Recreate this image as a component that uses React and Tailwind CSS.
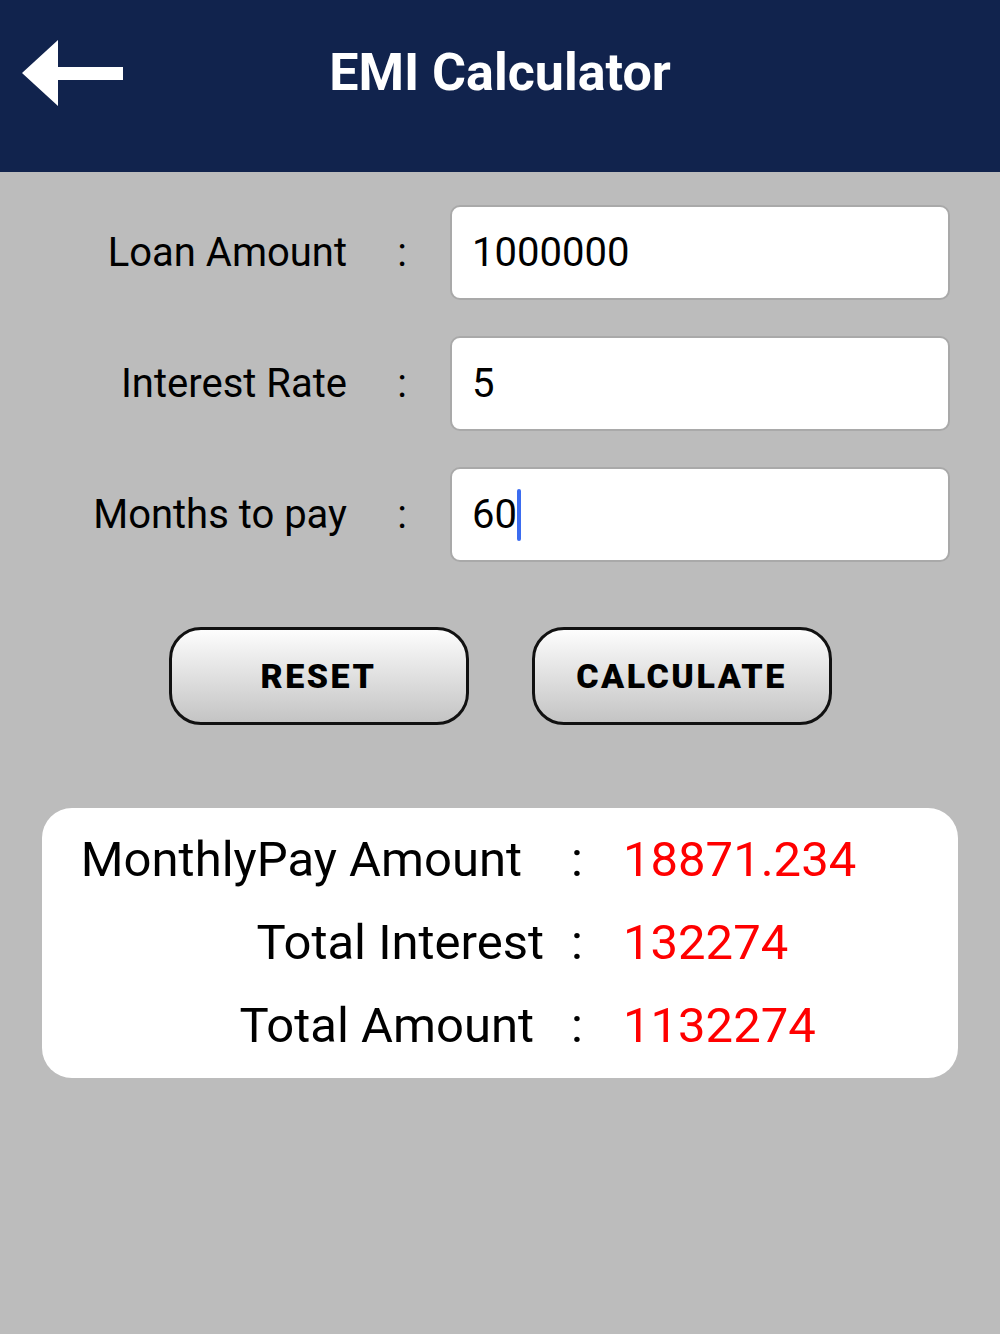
import React from 'react';

const fields = [
  { label: 'Loan Amount', value: '1000000' },
  { label: 'Interest Rate', value: '5' },
  { label: 'Months to pay', value: '60', focused: true },
];

const results = [
  { label: 'MonthlyPay Amount', value: '18871.234', pad: 'pr-[22px]' },
  { label: 'Total Interest', value: '132274', pad: 'pr-0' },
  { label: 'Total Amount', value: '1132274', pad: 'pr-[10px]' },
];

const BackArrow = () => (
  <svg width="101" height="66" viewBox="0 0 101 66" className="shrink-0">
    <polygon points="0,33 36,0 36,27 101,27 101,40 36,40 36,66" fill="#ffffff" />
  </svg>
);

export default function App() {
  return (
    <div className="min-h-[1334px] bg-[#bcbcbc] font-['Roboto',sans-serif]">
      {/* Header */}
      <div className="h-[172px] bg-[#11234d] flex items-start pt-[40px] px-[22px]">
        <BackArrow />
        <h1 className="flex-1 text-center text-white font-bold text-[52px] leading-[66px]">
          EMI Calculator
        </h1>
        <div className="w-[101px] shrink-0" />
      </div>

      {/* Form */}
      <div className="flex flex-col gap-[36px] pt-[33px]">
        {fields.map((f) => (
          <div key={f.label} className="flex items-center">
            <div className="w-[347px] text-right text-[40px] text-black">{f.label}</div>
            <div className="w-[103px] pl-[7px] text-center text-[40px] text-black">:</div>
            <div className="w-[500px] h-[95px] bg-white rounded-[10px] border-[2.5px] border-[#a9a9a9] flex items-center pl-[20px] text-[40px] text-black">
              {f.value}
              {f.focused && <span className="inline-block w-[4px] h-[52px] bg-[#3b6cf0] rounded-full" />}
            </div>
          </div>
        ))}
      </div>

      {/* Buttons */}
      <div className="flex justify-center gap-[63px] mt-[65px]">
        {['RESET', 'CALCULATE'].map((b) => (
          <button
            key={b}
            className="w-[300px] h-[98px] rounded-[32px] border-[3px] border-[#111111] bg-gradient-to-b from-[#fdfdfd] to-[#c4c4c4] text-[34px] font-black tracking-[2.5px] text-black"
          >
            {b}
          </button>
        ))}
      </div>

      {/* Results */}
      <div className="mx-[42px] mt-[83px] bg-white rounded-[30px] pt-[10px] pb-[11px]">
        {results.map((r) => (
          <div key={r.label} className="flex items-baseline leading-[83px] text-[49px]">
            <div className={`w-[502px] text-right text-black ${r.pad}`}>{r.label}</div>
            <div className="w-[66px] text-center text-black">:</div>
            <div className="pl-[13px] text-[#ff0000]">{r.value}</div>
          </div>
        ))}
      </div>
    </div>
  );
}
